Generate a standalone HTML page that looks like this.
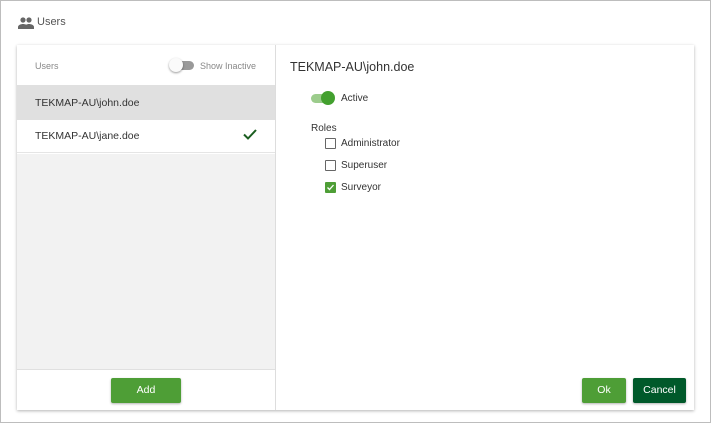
<!DOCTYPE html>
<html><head><style>
*{box-sizing:border-box;margin:0;padding:0}
body{width:711px;height:423px;background:#fff;font-family:"Liberation Sans",sans-serif;position:relative;overflow:hidden}
.outer{position:absolute;left:0;top:0;width:711px;height:423px;border:1px solid #bdbdbd}
.t{position:absolute;white-space:nowrap}
.card{position:absolute;left:17px;top:45px;width:677px;height:365px;background:#fff;box-shadow:0 1px 3px rgba(0,0,0,.3)}
.left{position:absolute;left:0;top:0;width:259px;height:365px;border-right:1px solid #ddd}
.btn{position:absolute;color:#fff;font-size:10.5px;text-align:center;line-height:25px;border-radius:2px;box-shadow:0 1px 2px rgba(0,0,0,.3)}
.cb{position:absolute;left:325px;width:11px;height:11px;border:1.5px solid #666;border-radius:1px}
</style></head><body>
<div class="outer"></div>
<svg style="position:absolute;left:18px;top:17px" width="16" height="12" viewBox="0 0 16 12"><circle cx="5" cy="3" r="2.6" fill="#666"/><circle cx="11" cy="3" r="2.6" fill="#666"/><path d="M0 12v-2c0-2 3-3 5-3s5 1 5 3v2z" fill="#666"/><path d="M7 12v-2c0-2 2-3 4-3s5 1 5 3v2z" fill="#666"/></svg>
<div class="t" style="left:37px;top:16px;font-size:11px;color:#555">Users</div>
<div class="card">
 <div class="left">
  <div class="t" style="left:18px;top:16px;font-size:9px;color:#888">Users</div>
  <div style="position:absolute;left:155px;top:16px;width:22px;height:9px;border-radius:5px;background:#999"></div>
  <div style="position:absolute;left:152px;top:13px;width:14px;height:14px;border-radius:50%;background:#fafafa;box-shadow:0 1px 2px rgba(0,0,0,.4)"></div>
  <div class="t" style="left:183px;top:16px;font-size:9px;color:#888">Show Inactive</div>
  <div style="position:absolute;left:0;top:40px;width:258px;height:35px;background:#e0e0e0"></div>
  <div class="t" style="left:18px;top:52px;font-size:10.5px;color:#333">TEKMAP-AU\john.doe</div>
  <div style="position:absolute;left:0;top:75px;width:258px;height:33px;background:#fff;border-bottom:1px solid #e5e5e5"></div>
  <div class="t" style="left:18px;top:85px;font-size:10.5px;color:#333">TEKMAP-AU\jane.doe</div>
  <svg style="position:absolute;left:226px;top:84px" width="14" height="11" viewBox="0 0 14 11"><path d="M1 5.5l4 4L13 1" stroke="#1b5e20" stroke-width="2" fill="none"/></svg>
  <div style="position:absolute;left:0;top:109px;width:258px;height:216px;background:#f2f2f2;border-bottom:1px solid #e0e0e0"></div>
  <div class="btn" style="left:94px;top:333px;width:70px;background:#4e9e36">Add</div>
 </div>
</div>
<div class="t" style="left:290px;top:60px;font-size:12.5px;color:#333">TEKMAP-AU\john.doe</div>
<div style="position:absolute;left:311px;top:94px;width:22px;height:9px;border-radius:5px;background:#9ccc8c"></div>
<div style="position:absolute;left:321px;top:91px;width:14px;height:14px;border-radius:50%;background:#43a02f"></div>
<div class="t" style="left:341px;top:93px;font-size:10px;color:#333">Active</div>
<div class="t" style="left:311px;top:123px;font-size:10px;color:#333">Roles</div>
<div class="cb" style="top:138px"></div>
<div class="t" style="left:341px;top:138px;font-size:10px;color:#333">Administrator</div>
<div class="cb" style="top:160px"></div>
<div class="t" style="left:341px;top:160px;font-size:10px;color:#333">Superuser</div>
<div style="position:absolute;left:325px;top:182px;width:11px;height:11px;background:#4e9e36;border-radius:1px"></div>
<svg style="position:absolute;left:326px;top:183px" width="9" height="9" viewBox="0 0 9 9"><path d="M1.5 4.5l2 2 4-4.5" stroke="#fff" stroke-width="1.3" fill="none"/></svg>
<div class="t" style="left:341px;top:182px;font-size:10px;color:#333">Surveyor</div>
<div class="btn" style="left:582px;top:378px;width:44px;background:#4e9e36">Ok</div>
<div class="btn" style="left:633px;top:378px;width:53px;background:#00592a">Cancel</div>
</body></html>
